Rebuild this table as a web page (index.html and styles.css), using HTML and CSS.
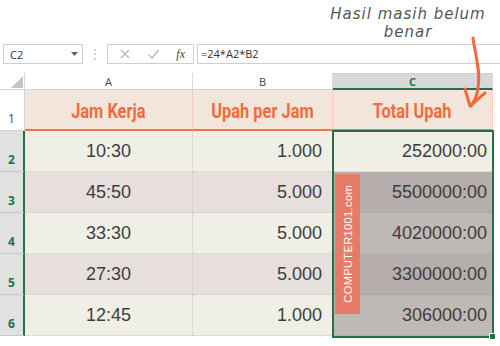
FILE: index.html
```html
<!DOCTYPE html>
<html lang="id">
<head>
    <meta charset="UTF-8">
    <meta name="viewport" content="width=device-width, initial-scale=1.0">
    <title>Total Upah</title>
    <link rel="stylesheet" href="styles.css">
</head>
<body>
    <!-- catatan di atas -->
    <div class="top">
        <div class="note">
            <div class="line">Hasil masih belum</div>
            <div class="line">benar</div>
        </div>
    </div>

    <!-- formula bar -->
    <div class="fbar">
        <div class="namebox">
            <span>C2</span>
            <svg class="caret" width="7" height="4" viewBox="0 0 7 4"><polygon points="0,0 7,0 3.5,4" fill="#666"/></svg>
        </div>
        <div class="grip">⋮</div>
        <div class="btns">
            <svg width="12" height="12" viewBox="0 0 12 12"><path d="M2 2 L10 10 M10 2 L2 10" stroke="#b5b5b5" stroke-width="1.2" fill="none"/></svg>
            <svg width="13" height="12" viewBox="0 0 13 12"><path d="M1.5 6.5 L5 10 L11.5 2" stroke="#b5b5b5" stroke-width="1.2" fill="none"/></svg>
            <span class="fx">fx</span>
        </div>
        <div class="formula">=24*A2*B2</div>
    </div>

    <!-- lembar kerja -->
    <div class="sheet">
        <div class="row colhead">
            <div class="rh corner">
                <svg width="12" height="12" viewBox="0 0 12 12"><polygon points="12,0 12,12 0,12" fill="#c4c4c4"/></svg>
            </div>
            <div class="cell ca">A</div>
            <div class="cell cb">B</div>
            <div class="cell cc on">C</div>
            <div class="cell cd"></div>
        </div>

        <div class="row title">
            <div class="rh">1</div>
            <div class="cell ca"><span>Jam Kerja</span></div>
            <div class="cell cb"><span>Upah per Jam</span></div>
            <div class="cell cc"><span>Total Upah</span></div>
            <div class="cell cd"></div>
        </div>

        <div class="row light">
            <div class="rh sel">2</div>
            <div class="cell ca">10:30</div>
            <div class="cell cb">1.000</div>
            <div class="cell cc">252000:00</div>
            <div class="cell cd"></div>
        </div>
        <div class="row dark">
            <div class="rh sel">3</div>
            <div class="cell ca">45:50</div>
            <div class="cell cb">5.000</div>
            <div class="cell cc pick">5500000:00</div>
            <div class="cell cd"></div>
        </div>
        <div class="row light">
            <div class="rh sel">4</div>
            <div class="cell ca">33:30</div>
            <div class="cell cb">5.000</div>
            <div class="cell cc pick">4020000:00</div>
            <div class="cell cd"></div>
        </div>
        <div class="row dark">
            <div class="rh sel">5</div>
            <div class="cell ca">27:30</div>
            <div class="cell cb">5.000</div>
            <div class="cell cc pick">3300000:00</div>
            <div class="cell cd"></div>
        </div>
        <div class="row light">
            <div class="rh sel">6</div>
            <div class="cell ca">12:45</div>
            <div class="cell cb">1.000</div>
            <div class="cell cc pick">306000:00</div>
            <div class="cell cd"></div>
        </div>

        <div class="selection"><span class="handle"></span></div>
        <div class="stamp"><span>COMPUTER1001.com</span></div>
    </div>

    <!-- panah ke kolom C -->
    <svg class="arrow" width="40" height="84" viewBox="0 0 40 84">
        <path d="M18 6 C20 22 26 40 23 56 C22 63 20 69 16 74" stroke="#f06a3e" stroke-width="3" fill="none" stroke-linecap="round"/>
        <path d="M10 57 L15 74 L30 61" stroke="#f06a3e" stroke-width="3" fill="none" stroke-linecap="round" stroke-linejoin="round"/>
    </svg>
</body>
</html>
```

FILE: styles.css
```css
body {
    margin: 0;
    background: #fff;
    font-family: "Open Sans", "Liberation Sans", sans-serif;
    position: relative;
    width: 500px;
    height: 346px;
    overflow: hidden;
}

/* catatan */
.top {
    height: 44px;
}
.note {
    margin-left: 318px;
    width: 180px;
    padding-top: 5px;
    text-align: center;
    font-family: "DejaVu Sans", sans-serif;
    font-style: oblique;
    font-size: 15px;
    color: #555;
    letter-spacing: 1px;
}
.note .line {
    height: 18px;
    line-height: 18px;
}

/* formula bar */
.fbar {
    display: flex;
    align-items: stretch;
    height: 20px;
    font-size: 11px;
    color: #333;
}
.namebox {
    margin-left: 3px;
    width: 80px;
    box-sizing: border-box;
    border: 1px solid #cfcfcf;
    display: flex;
    align-items: center;
    justify-content: space-between;
    padding: 0 4px 0 6px;
}
.grip {
    width: 24px;
    text-align: center;
    color: #b8b8b8;
    line-height: 20px;
    font-size: 12px;
}
.btns {
    width: 87px;
    box-sizing: border-box;
    border: 1px solid #cfcfcf;
    display: flex;
    align-items: center;
    justify-content: space-between;
    padding: 0 8px 0 11px;
}
.fx {
    font-family: "Liberation Serif", serif;
    font-style: italic;
    font-size: 12px;
    color: #444;
}
.formula {
    margin-left: 3px;
    flex: 1;
    border: 1px solid #cfcfcf;
    border-right: none;
    padding-left: 3px;
    line-height: 18px;
}

/* lembar kerja */
.sheet {
    position: relative;
    margin-top: 9px;
}
.row {
    display: flex;
    height: 41px;
}
.rh {
    width: 25px;
    flex: none;
    box-sizing: border-box;
    border-right: 1px solid #d4d4d4;
    border-bottom: 1px solid #d4d4d4;
    font-size: 12px;
    color: #444;
    display: flex;
    align-items: flex-end;
    padding: 0 0 3px 8px;
}
.rh.sel {
    background: #e1e1e1;
    color: #217346;
    font-weight: 700;
    border-right: 2px solid #217346;
    border-bottom-color: #c9c9c9;
}
.cell {
    box-sizing: border-box;
    flex: none;
    display: flex;
    align-items: center;
    border-right: 1px dotted #cdcac4;
    border-bottom: 1px dotted #cdcac4;
    font-family: "Liberation Sans", Arial, sans-serif;
    font-size: 18px;
    color: #3d3d3d;
}
.ca { width: 168px; justify-content: center; }
.cb { width: 140px; justify-content: flex-end; padding-right: 10px; }
.cc { width: 160px; justify-content: flex-end; padding-right: 5px; }
.cd { width: 7px; background: #fff; border: none; }

/* kepala kolom */
.colhead {
    height: 17px;
}
.colhead .rh {
    border-bottom: 1px solid #d4d4d4;
    padding: 0 1px 1px 0;
    justify-content: flex-end;
}
.colhead .cell {
    font-family: "Open Sans", sans-serif;
    font-size: 11px;
    color: #444;
    justify-content: center;
    padding: 0;
    border-right: 1px solid #d9d9d9;
    border-bottom: 1px solid #d4d4d4;
}
.colhead .on {
    background: #d8d8d8;
    color: #217346;
    font-weight: 700;
    border-top: 1px solid #d0d0d0;
    border-bottom: 2px solid #217346;
}
.colhead .cd { border: none; }

/* baris judul */
.title .cell {
    background: #f2e5dc;
    font-family: Roboto, "Liberation Sans", sans-serif;
    font-weight: 700;
    font-size: 20px;
    color: #f26b3d;
    justify-content: center;
    padding: 3px 0 0;
    border-right: 1px dotted #f2b9a0;
    border-bottom: 2px solid #f0734a;
}
.title .cell span {
    display: inline-block;
    transform: scaleX(0.82);
    white-space: nowrap;
}
.title .cd { background: #fff; border: none; }
.title .rh { border-bottom-color: #d4d4d4; }

.light .cell { background: #f0efe6; }
.dark .cell { background: #e7dfde; }
.light .cc.pick { background: #bfb9b5; }
.dark .cc.pick { background: #b6aeac; }
.row .cd { background: #fff; border: none; }
.cell.pick { border-bottom-color: #a9a19f; }

/* sel terpilih */
.selection {
    position: absolute;
    left: 332px;
    top: 57px;
    width: 162px;
    height: 208px;
    box-sizing: border-box;
    border: 2px solid #217346;
}
.handle {
    position: absolute;
    right: -4px;
    bottom: -4px;
    width: 5px;
    height: 5px;
    background: #217346;
    border: 1px solid #fff;
}

/* cap situs */
.stamp {
    position: absolute;
    left: 335px;
    top: 101px;
    width: 25px;
    height: 140px;
    background: #e77b67;
    display: flex;
    align-items: center;
    justify-content: center;
}
.stamp span {
    writing-mode: vertical-rl;
    transform: rotate(180deg);
    color: #fff;
    font-family: "Liberation Sans", sans-serif;
    font-size: 11px;
    letter-spacing: 0.4px;
}

.arrow {
    position: absolute;
    left: 455px;
    top: 32px;
}
```
